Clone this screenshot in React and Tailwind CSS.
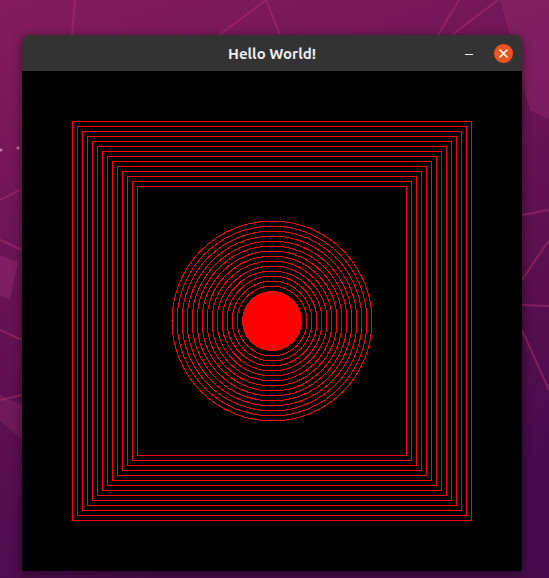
import React from 'react'

const squares = Array.from({ length: 14 }, (_, i) => i)
const rings = Array.from({ length: 14 }, (_, i) => 100 - i * 5)

const Wallpaper = () => (
  <svg className="absolute inset-0" width="549" height="578" viewBox="0 0 549 578">
    <defs>
      <linearGradient id="wp" x1="0" y1="0" x2="0.3" y2="1">
        <stop offset="0" stopColor="#841c5d" />
        <stop offset="0.5" stopColor="#651253" />
        <stop offset="1" stopColor="#480b4a" />
      </linearGradient>
    </defs>
    <rect width="549" height="578" fill="url(#wp)" />
    <g stroke="#a8306f" strokeOpacity="0.55" strokeWidth="2" fill="none">
      <path d="M72 35 L75 0" />
      <path d="M219 35 L266 0 L280 35" />
      <path d="M438 35 L459 0" />
      <path d="M452 35 L498 0" />
      <path d="M0 200 L20 190" />
      <path d="M0 240 L22 250" />
      <path d="M0 330 L22 340" />
      <path d="M0 400 L22 395" />
      <path d="M522 215 L549 210" />
      <path d="M522 280 L549 240" />
      <path d="M522 305 L549 306" />
      <path d="M522 330 L549 390" />
    </g>
    <path d="M500 0 L549 0 L549 120 L530 110 Z" fill="#9a3273" fillOpacity="0.35" />
    <path d="M0 255 L18 262 L10 300 L0 295 Z" fill="#9a3273" fillOpacity="0.4" />
    <path d="M0 395 L22 405 L22 440 L0 420 Z" fill="#9a3273" fillOpacity="0.3" />
    <circle cx="1" cy="150" r="1.5" fill="#c27aa5" />
    <circle cx="18" cy="148" r="1.5" fill="#c27aa5" />
  </svg>
)

const Canvas = () => (
  <svg width="500" height="500" viewBox="0 0 500 500" className="block bg-black">
    {squares.map((i) => (
      <rect
        key={i}
        x={50.5 + i * 5}
        y={50.5 + i * 5}
        width={399 - i * 10}
        height={399 - i * 10}
        fill="none"
        stroke="#ff0000"
        strokeWidth="1"
        shapeRendering="crispEdges"
      />
    ))}
    {rings.map((r) => (
      <circle
        key={r}
        cx="250"
        cy="250"
        r={r}
        fill="none"
        stroke="#ff0000"
        strokeWidth="1"
        shapeRendering="crispEdges"
      />
    ))}
    <circle cx="250" cy="250" r="30" fill="#ff0000" shapeRendering="crispEdges" />
  </svg>
)

export default function App() {
  return (
    <div className="relative w-[549px] h-[578px] overflow-hidden">
      <Wallpaper />

      {/* window */}
      <div className="absolute left-[22px] top-[35px] w-[500px] flex flex-col shadow-[0_2px_10px_rgba(0,0,0,0.5)] rounded-t-[7px]">
        <div className="relative h-[36px] bg-[#333333] rounded-t-[7px] flex items-center justify-center">
          <span className="text-[15px] font-bold text-[#eeeeec] font-['Ubuntu','Open_Sans',sans-serif] leading-none">
            Hello World!
          </span>
          <div className="absolute right-[9px] top-0 h-full flex items-center gap-[21px]">
            <div className="w-[8px] h-[1.5px] bg-[#eeeeec] mt-[3px]" />
            <div className="w-[19px] h-[19px] rounded-full bg-[#e95420] flex items-center justify-center">
              <svg width="9" height="9" viewBox="0 0 9 9">
                <path d="M1 1 L8 8 M8 1 L1 8" stroke="#ffffff" strokeWidth="1.6" strokeLinecap="round" />
              </svg>
            </div>
          </div>
        </div>
        <Canvas />
      </div>
    </div>
  )
}
